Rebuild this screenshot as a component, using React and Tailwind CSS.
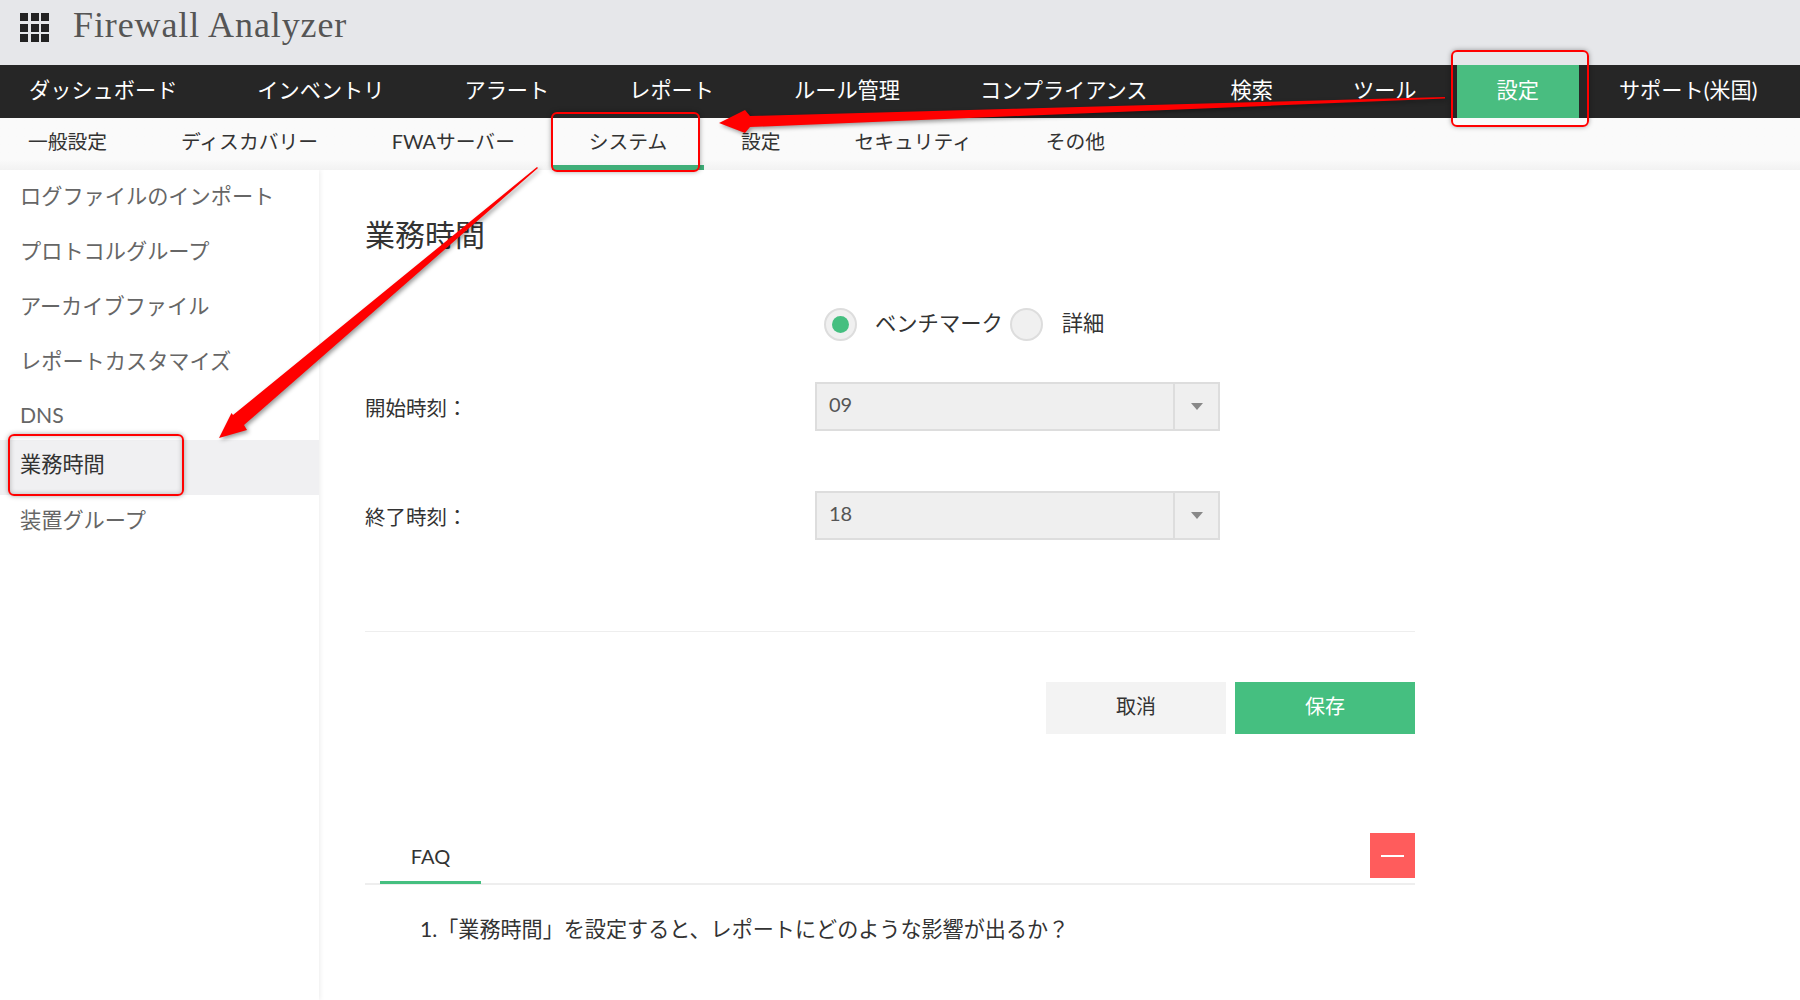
import React from "react";

const FONT = "font-['Lato','Noto_Sans_CJK_JP',sans-serif]";

const mainNav = ["ダッシュボード", "インベントリ", "アラート", "レポート", "ルール管理", "コンプライアンス", "検索", "ツール", "設定", "サポート(米国)"];
const subNav = ["一般設定", "ディスカバリー", "FWAサーバー", "システム", "設定", "セキュリティ", "その他"];
const sideNav = [
  ["ログファイルのインポート", "h-[55px] pb-[2px]"],
  ["プロトコルグループ", "h-[55px] pb-[2px]"],
  ["アーカイブファイル", "h-[55px] pb-[2px]"],
  ["レポートカスタマイズ", "h-[55px] pb-[2px]"],
  ["DNS", "h-[50px] pt-[2px]"],
  ["業務時間", "h-[55px] pb-[6px] bg-[#f0f0f2] text-[#333]"],
  ["装置グループ", "h-[55px] pb-[4px]"],
];

const AppGrid = () => (
  <div className="grid grid-cols-3 gap-[2.5px] w-[29px] h-[29px]">
    {Array.from({ length: 9 }).map((_, i) => (
      <span key={i} className="bg-[#222]" />
    ))}
  </div>
);

const Select = ({ value }) => (
  <div className="flex w-[405px] h-[49px] border-2 border-[#ddd] bg-[#efefef]">
    <div className="flex-1 pl-3 pb-[6px] flex items-center text-[20px] text-[#555]">{value}</div>
    <div className="w-[45px] border-l-2 border-[#ddd] flex items-center justify-center">
      <span className="w-0 h-0 border-x-[6px] border-x-transparent border-t-[7px] border-t-[#888]" />
    </div>
  </div>
);

const Radio = ({ checked }) => (
  <span className="w-[33px] h-[33px] rounded-full border-2 border-[#ddd] bg-[#f0f0f0] flex items-center justify-center">
    {checked && <span className="w-[17px] h-[17px] rounded-full bg-[#45bf80]" />}
  </span>
);

const Field = ({ label, value }) => (
  <div className="flex items-center h-[49px]">
    <label className="w-[450px] text-[20.5px] text-[#333] pt-[4px]">{label}</label>
    <Select value={value} />
  </div>
);

// red marks drawn over the screenshot
const Notes = () => (
  <div className="absolute left-0 top-0 z-20 pointer-events-none">
    <div className="absolute left-[1451px] top-[50px] w-[138px] h-[77px] border-2 border-[#f00] rounded-md shadow-[0_0_5px_rgba(0,0,0,0.35)]" />
    <div className="absolute left-[551px] top-[112px] w-[149px] h-[60px] border-2 border-[#f00] rounded-md shadow-[0_0_5px_rgba(0,0,0,0.35)]" />
    <div className="absolute left-[8px] top-[434px] w-[176px] h-[62px] border-2 border-[#f00] rounded-md shadow-[0_0_5px_rgba(0,0,0,0.35),inset_0_0_5px_rgba(0,0,0,0.25)]" />
    <svg className="absolute left-0 top-0 drop-shadow-[2px_2px_2px_rgba(0,0,0,0.4)]" width="1800" height="1000">
      <polygon fill="#f00" points="1445,97 1445,98.5 750,127 745,133 719,123 745,110 750,116" />
      <polygon fill="#f00" points="537,167 538,168 244,425 247,430 219,438 231.5,413 233,415" />
    </svg>
  </div>
);

export default function App() {
  return (
    <div className={`relative w-[1800px] h-[1000px] overflow-hidden bg-white ${FONT}`}>
      <header className="h-[65px] bg-[#e6e7ea] flex items-start pl-5 pt-[13px] gap-[24px]">
        <AppGrid />
        <h1 className="font-['Liberation_Serif',serif] text-[36px] leading-[25px] text-[#555] tracking-[0.9px]">Firewall Analyzer</h1>
      </header>

      <nav className="h-[53px] bg-[#262626] flex text-[21.2px] text-white">
        {mainNav.map((item, i) => (
          <a key={i} className={`h-full flex items-center pb-[2px] px-10 first:pl-[29px] whitespace-nowrap ${item === "設定" ? "bg-[#49bd80]" : ""} ${item === "コンプライアンス" ? "pr-[43px]" : ""}`}>
            {item}
          </a>
        ))}
      </nav>

      <nav className="h-[52px] bg-gradient-to-b from-[#fafafa] from-80% to-[#f2f2f2] flex text-[19.8px] text-[#333] relative z-10">
        {subNav.map((item, i) => (
          <a key={i} className={`h-full flex items-center px-[36.9px] first:pl-7 whitespace-nowrap ${item === "システム" ? "border-b-[5px] border-[#3fae78] pb-0" : "pb-[5px]"}`}>
            {item}
          </a>
        ))}
      </nav>

      <div className="flex">
        <aside className="w-[319px] h-[830px] shrink-0 shadow-[1px_0_5px_rgba(0,0,0,0.08)] text-[21.2px] text-[#666]">
          {sideNav.map(([item, cls]) => (
            <div key={item} className={`flex items-center pl-5 ${cls}`}>{item}</div>
          ))}
        </aside>

        <main className="w-[1050px] ml-[46px]">
          <h2 className="text-[30px] leading-[40px] text-[#333] mt-[44px]">業務時間</h2>

          <div className="flex items-center h-[33px] mt-[54px] ml-[459px] text-[21.3px] text-[#333]">
            <Radio checked />
            <span className="ml-[18px] mr-[7px] pb-[1px]">ベンチマーク</span>
            <Radio />
            <span className="ml-[19px] pb-[1px]">詳細</span>
          </div>

          <div className="mt-[41px]"><Field label="開始時刻：" value="09" /></div>
          <div className="mt-[60px]"><Field label="終了時刻：" value="18" /></div>

          <div className="mt-[91px] border-t border-[#eee]" />

          <div className="flex justify-end gap-[9px] mt-[50px] text-[20px]">
            <button className="w-[180px] h-[52px] pb-[5px] bg-[#f3f3f3] text-[#333]">取消</button>
            <button className="w-[180px] h-[52px] pb-[5px] bg-[#45bf80] text-white">保存</button>
          </div>

          <div className="relative flex justify-between items-start mt-[99px] h-[52px] border-b-2 border-[#eee]">
            <div className="ml-[15px] w-[101px] h-[51px] border-b-[3px] border-[#45bf80] flex items-center justify-center text-[20px] text-[#333] pb-[2px]">FAQ</div>
            <button className="w-[45px] h-[45px] bg-[#ff5c5c] flex items-center justify-center">
              <span className="w-[23px] h-[2px] bg-white" />
            </button>
          </div>

          <ol className="mt-[28px] ml-[55px] text-[21.1px] text-[#333]">
            <li>1.「業務時間」を設定すると、レポートにどのような影響が出るか？</li>
          </ol>
        </main>
      </div>

      <Notes />
    </div>
  );
}
